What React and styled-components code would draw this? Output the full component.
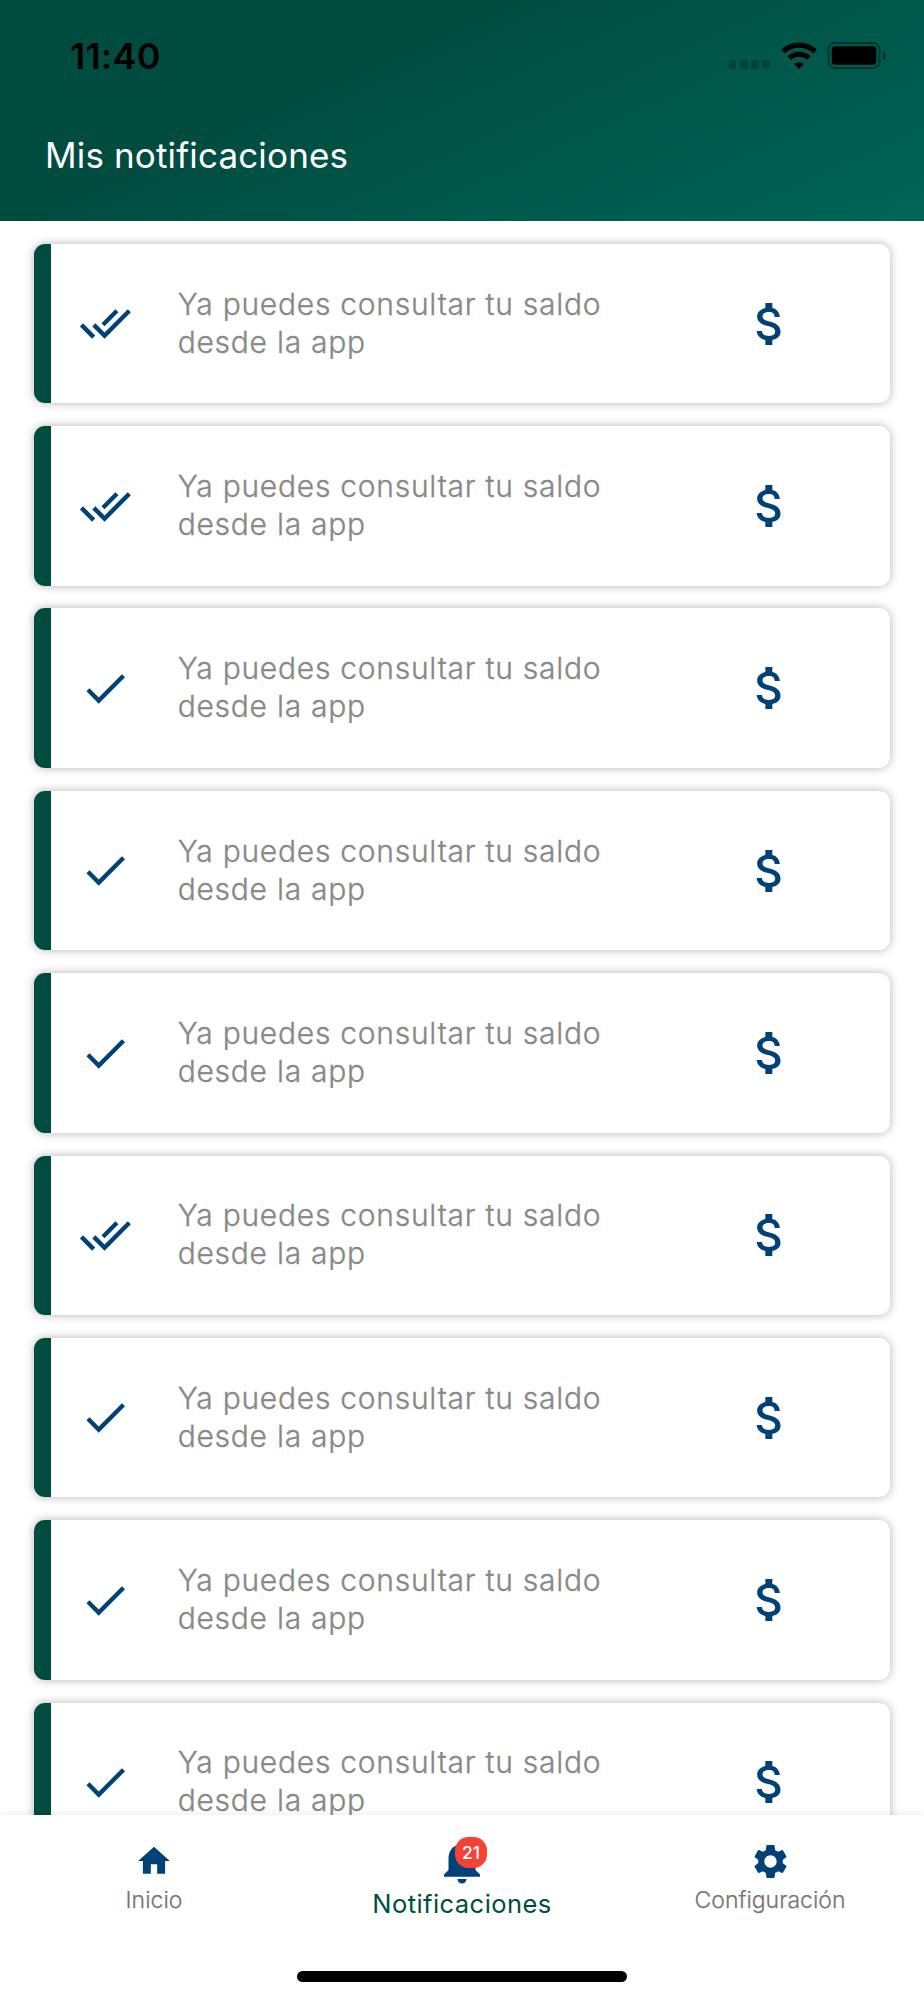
import React from "react";
import styled, { createGlobalStyle } from "styled-components";
import {
  MdAttachMoney,
  MdDone,
  MdDoneAll,
  MdHome,
  MdNotifications,
  MdSettings,
} from "react-icons/md";

const GlobalStyle = createGlobalStyle`
  * {
    box-sizing: border-box;
  }
  body {
    margin: 0;
    background: #fff;
    font-family: Inter, "Liberation Sans", sans-serif;
    -webkit-font-smoothing: antialiased;
  }
`;

const Screen = styled.div`
  display: flex;
  flex-direction: column;
  width: 924px;
  height: 2000px;
  overflow: hidden;
  background: #fff;
`;

const Header = styled.header`
  flex: none;
  display: flex;
  flex-direction: column;
  height: 221px;
  background: linear-gradient(156deg, #004d40 36%, #006557 100%);
`;

const StatusBar = styled.div`
  display: flex;
  align-items: center;
  justify-content: space-between;
  height: 111px;
  padding: 0 38px 0 70px;
`;

const Time = styled.span`
  font-size: 36px;
  font-weight: 600;
  line-height: 40px;
  letter-spacing: 0.2px;
  color: #000;
`;

const StatusIcons = styled.div`
  display: flex;
  align-items: center;
`;

const Signal = styled.div`
  display: flex;
  align-self: flex-end;
  gap: 3.5px;
  margin-right: 10.5px;
`;

const Dot = styled.i`
  width: 7.7px;
  height: 9px;
  border-radius: 2.5px;
  background: rgba(0, 0, 0, 0.22);
`;

const WifiIcon = styled.svg`
  display: block;
  width: 36px;
  height: 27px;
  margin-right: 10.5px;
`;

const BatteryIcon = styled.svg`
  display: block;
  width: 59px;
  height: 27px;
`;

const Title = styled.h1`
  margin: 0;
  padding: 22px 0 0 45px;
  font-size: 35px;
  font-weight: 400;
  line-height: 44px;
  letter-spacing: 0.15px;
  color: #fff;
`;

const List = styled.main`
  flex: 1;
  min-height: 0;
  display: flex;
  flex-direction: column;
  gap: 22.85px;
  padding: 22.8px 34px 0;
  overflow: hidden;
`;

const Card = styled.article`
  flex: none;
  display: flex;
  align-items: center;
  height: 159.5px;
  border-left: 17px solid #004d40;
  border-radius: 11px;
  background: #fff;
  box-shadow: 0 0 10px rgba(0, 0, 0, 0.3);
`;

const Status = styled.div`
  display: flex;
  justify-content: center;
  width: 110px;
  padding-left: 2px;
  color: #004177;
  font-size: 52.6px;
`;

const Message = styled.p`
  width: 450px;
  margin: -1px 0 1px 20px;
  font-size: 30px;
  font-weight: 300;
  line-height: 38px;
  letter-spacing: 0.74px;
  color: #888;
  -webkit-text-stroke: 0.35px #888;
`;

const Amount = styled.div`
  display: flex;
  justify-content: center;
  width: 284px;
  padding: 0 0 0 37px;
  color: #004177;
  font-size: 56px;
`;

const Nav = styled.nav`
  position: relative;
  flex: none;
  display: flex;
  flex-direction: column;
  align-items: center;
  height: 185.3px;
  background: #fff;
  box-shadow: 0 0 8px rgba(0, 0, 0, 0.1);
`;

const Tabs = styled.div`
  display: grid;
  grid-template-columns: repeat(3, 1fr);
  width: 100%;
  height: 156px;
`;

const Tab = styled.div`
  display: flex;
  flex-direction: column;
  align-items: center;
  padding-top: 19px;
`;

const TabIcon = styled.div`
  position: relative;
  display: flex;
  align-items: center;
  justify-content: center;
  width: 54px;
  height: 55px;
  color: #004177;
  font-size: ${({ $size }) => $size}px;
`;

const Label = styled.span`
  margin-top: ${({ $active }) => ($active ? "-1px" : "-5px")};
  font-size: ${({ $active }) => ($active ? "25.5px" : "23px")};
  font-weight: ${({ $active }) => ($active ? 400 : 300)};
  line-height: 32px;
  letter-spacing: ${({ $active }) => ($active ? "0.45px" : "0")};
  color: ${({ $active }) => ($active ? "#004d40" : "#757575")};
  -webkit-text-stroke: ${({ $active }) => ($active ? "0" : "0.25px #757575")};
`;

const Badge = styled.span`
  position: absolute;
  top: 3px;
  left: 20px;
  display: flex;
  align-items: center;
  justify-content: center;
  width: 32px;
  height: 31.5px;
  border-radius: 13.5px;
  background: #f44336;
  color: #fff;
  font-size: 17.5px;
  font-weight: 500;
`;

const HomeIndicator = styled.div`
  width: 330px;
  height: 11px;
  border-radius: 6px;
  background: #000;
`;

const notifications = [
  { id: 1, read: true },
  { id: 2, read: true },
  { id: 3, read: false },
  { id: 4, read: false },
  { id: 5, read: false },
  { id: 6, read: true },
  { id: 7, read: false },
  { id: 8, read: false },
  { id: 9, read: false },
];

const tabs = [
  { label: "Inicio", icon: MdHome, size: 38 },
  { label: "Notificaciones", icon: MdNotifications, size: 54, badge: 21, active: true },
  { label: "Configuración", icon: MdSettings, size: 41 },
];

const Wifi = () => (
  <WifiIcon viewBox="0 0 36 27">
    <g fill="none" stroke="#000">
      <path d="M1.9 9.6a23.4 23.4 0 0 1 32.2 0" strokeWidth="5.2" />
      <path d="M8.2 16.1a14.3 14.3 0 0 1 19.6 0" strokeWidth="5" />
    </g>
    <path d="M18 27l-4.9-4.9a7.2 7.2 0 0 1 9.8 0z" fill="#000" />
  </WifiIcon>
);

const Battery = () => (
  <BatteryIcon viewBox="0 0 59 27">
    <rect x="1.5" y="1" width="51" height="25" rx="6.5" fill="none" stroke="#000" strokeOpacity="0.4" strokeWidth="2" />
    <rect x="4.7" y="4.2" width="44.6" height="18.6" rx="3.5" fill="#000" />
    <path d="M56 9c1.8.7 2.8 2.5 2.8 4.5s-1 3.8-2.8 4.5z" fill="#000" fillOpacity="0.45" />
  </BatteryIcon>
);

const NotificationCard = ({ read }) => (
  <Card>
    <Status>{read ? <MdDoneAll /> : <MdDone />}</Status>
    <Message>
      Ya puedes consultar tu saldo
      <br />
      desde la app
    </Message>
    <Amount>
      <MdAttachMoney />
    </Amount>
  </Card>
);

const App = () => {
  return (
    <>
      <GlobalStyle />
      <Screen>
        <Header>
          <StatusBar>
            <Time>11:40</Time>
            <StatusIcons>
              <Signal>
                <Dot />
                <Dot />
                <Dot />
                <Dot />
              </Signal>
              <Wifi />
              <Battery />
            </StatusIcons>
          </StatusBar>
          <Title>Mis notificaciones</Title>
        </Header>
        <List>
          {notifications.map((item) => (
            <NotificationCard key={item.id} read={item.read} />
          ))}
        </List>
        <Nav>
          <Tabs>
            {tabs.map(({ label, icon: Icon, size, badge, active }) => (
              <Tab key={label}>
                <TabIcon $size={size}>
                  <Icon />
                  {badge && <Badge>{badge}</Badge>}
                </TabIcon>
                <Label $active={active}>{label}</Label>
              </Tab>
            ))}
          </Tabs>
          <HomeIndicator />
        </Nav>
      </Screen>
    </>
  );
};

export default App;
